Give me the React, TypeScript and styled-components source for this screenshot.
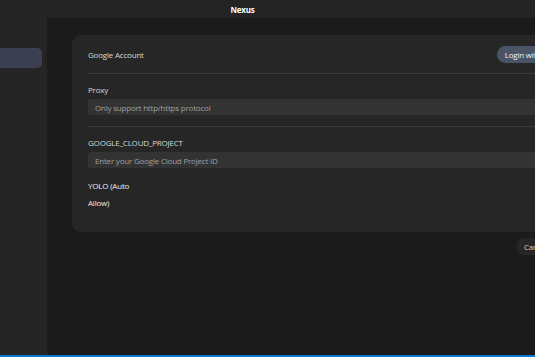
import * as React from "react";
import styled, { createGlobalStyle } from "styled-components";

const GlobalStyle = createGlobalStyle`
  html, body {
    margin: 0;
    padding: 0;
    width: 535px;
    height: 357px;
    overflow: hidden;
    background: #1b1b1b;
    font-family: "Open Sans", "Noto Sans", sans-serif;
    letter-spacing: -0.2px;
  }
  * { box-sizing: border-box; }
`;

const SApp = styled.div`
  width: 535px;
  height: 357px;
  display: flex;
  flex-direction: column;
  overflow: hidden;
  border-bottom: 2px solid #0a7ad1;
`;

const STitleBar = styled.div`
  height: 18px;
  flex-shrink: 0;
  display: flex;
  align-items: center;
  justify-content: center;
  padding-right: 50px;
  background: #242424;
  color: #ffffff;
  font-size: 8px;
  font-weight: 700;
`;

const SBody = styled.div`
  flex: 1;
  display: flex;
  min-height: 0;
`;

const SSidebar = styled.div`
  width: 47px;
  flex-shrink: 0;
  background: #252525;
  padding-top: 30px;
  padding-right: 5px;
`;

interface INavItem {
  active?: boolean;
}

const SNavItem = styled.div<INavItem>`
  height: 20px;
  border-radius: 0 5px 5px 0;
  background: ${({ active }) => (active ? "#3c3f51" : "transparent")};
`;

const SMain = styled.div`
  flex: 1;
  display: flex;
  flex-direction: column;
  padding: 17px 0 0 25px;
  min-width: 0;
`;

const SCard = styled.div`
  width: 520px;
  flex-shrink: 0;
  background: #262626;
  border-radius: 9px;
  padding: 11px 16px 21px 16px;
  display: flex;
  flex-direction: column;
`;

const SRow = styled.div`
  display: flex;
  align-items: center;
  justify-content: space-between;
  height: 17px;
`;

const SSection = styled.div`
  display: flex;
  flex-direction: column;
  padding: 10px 0 11px;
  border-top: 1px solid #3a3a3a;
`;

const SFirst = styled.div`
  padding-bottom: 10px;
`;

const SLabel = styled.div`
  color: #d8d8d8;
  font-size: 8px;
  line-height: 11px;
  margin-bottom: 4px;
`;

const SInput = styled.input`
  height: 16px;
  width: 100%;
  border: none;
  outline: none;
  border-radius: 2px;
  background: #333333;
  color: #d4d4d4;
  padding: 0 7px;
  font-family: inherit;
  font-size: 8px;
  letter-spacing: -0.2px;

  &::placeholder {
    color: #a0a0a0;
  }
`;

const SToggleRow = styled.div`
  display: flex;
  justify-content: space-between;
  align-items: flex-start;
  margin-top: -1px;
`;

const SToggleLabel = styled.div`
  width: 46px;
  color: #ededed;
  font-size: 8px;
  line-height: 17px;
`;

const SSwitch = styled.div`
  width: 28px;
  height: 14px;
  border-radius: 7px;
  background: #444;
`;

interface IPill {
  variant: "primary" | "ghost";
}

const SPill = styled.button<IPill>`
  height: 17px;
  border: none;
  border-radius: 9px;
  padding: 0 8px;
  font-family: inherit;
  font-size: 8px;
  letter-spacing: -0.2px;
  white-space: nowrap;
  color: ${({ variant }) => (variant === "primary" ? "#f2f2f2" : "#cfcfcf")};
  background: ${({ variant }) => (variant === "primary" ? "#4a5467" : "#262626")};
`;

const SFooter = styled.div`
  display: flex;
  gap: 6px;
  margin-top: 6px;
  padding-left: 444px;
`;

const App = () => {
  return (
    <>
      <GlobalStyle />
      <SApp>
        <STitleBar>Nexus</STitleBar>
        <SBody>
          <SSidebar>
            <SNavItem active />
          </SSidebar>
          <SMain>
            <SCard>
              <SFirst>
                <SRow>
                  <SLabel style={{ margin: 0 }}>Google Account</SLabel>
                  <SPill variant="primary">Login with Google</SPill>
                </SRow>
              </SFirst>
              <SSection>
                <SLabel>Proxy</SLabel>
                <SInput placeholder="Only support http/https protocol" />
              </SSection>
              <SSection style={{ paddingBottom: 10 }}>
                <SLabel>GOOGLE_CLOUD_PROJECT</SLabel>
                <SInput placeholder="Enter your Google Cloud Project ID" />
              </SSection>
              <SToggleRow>
                <SToggleLabel>YOLO (Auto Allow)</SToggleLabel>
                <SSwitch />
              </SToggleRow>
            </SCard>
            <SFooter>
              <SPill variant="ghost">Cancel</SPill>
              <SPill variant="primary">Save</SPill>
            </SFooter>
          </SMain>
        </SBody>
      </SApp>
    </>
  );
};

export default App;
